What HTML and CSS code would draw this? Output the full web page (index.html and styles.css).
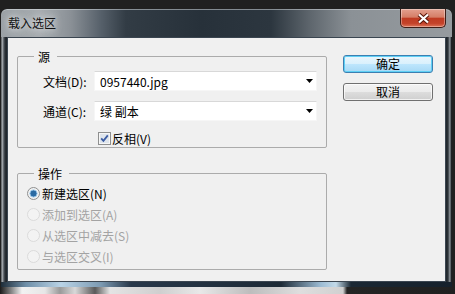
FILE: index.html
```html
<!DOCTYPE html>
<html lang="zh-CN">
<head>
    <meta charset="UTF-8">
    <meta name="viewport" content="width=device-width, initial-scale=1.0">
    <title>载入选区</title>
    <link rel="stylesheet" href="styles.css">
</head>
<body>

    <div class="window">
        <div class="titlebar">
            <span class="title">载入选区</span>
            <button class="close-button" type="button">
                <svg width="13" height="11" viewBox="0 0 13 11">
                    <path d="M2 1.5 L11 9.5 M11 1.5 L2 9.5" stroke="#5a1609" stroke-width="4.2" fill="none"/>
                    <path d="M2 1.5 L11 9.5 M11 1.5 L2 9.5" stroke="#ffffff" stroke-width="2.2" fill="none"/>
                </svg>
            </button>
        </div>

        <div class="client">
            <div class="main">
                <div class="group">
                    <div class="group-title">源</div>
                    <div class="field">
                        <label>文档(D):</label>
                        <div class="select">
                            <span>0957440.jpg</span>
                            <svg width="7" height="4" viewBox="0 0 7 4"><path d="M0 0 H7 L3.5 4 Z" fill="#000"/></svg>
                        </div>
                    </div>
                    <div class="field">
                        <label>通道(C):</label>
                        <div class="select">
                            <span>绿 副本</span>
                            <svg width="7" height="4" viewBox="0 0 7 4"><path d="M0 0 H7 L3.5 4 Z" fill="#000"/></svg>
                        </div>
                    </div>
                    <div class="check">
                        <svg width="13" height="13" viewBox="0 0 13 13">
                            <rect x="0.5" y="0.5" width="12" height="12" fill="#f6f6f6" stroke="#8e8f8f"/>
                            <rect x="2" y="2" width="9" height="9" fill="#dfe5ec"/>
                            <path d="M3.2 6.4 L5.4 8.8 L9.8 3.4" stroke="#3b5ca3" stroke-width="1.8" fill="none"/>
                        </svg>
                        <span>反相(V)</span>
                    </div>
                </div>

                <div class="group group-op">
                    <div class="group-title">操作</div>
                    <div class="radio">
                        <svg width="13" height="13" viewBox="0 0 13 13">
                            <circle cx="6.5" cy="6.5" r="6" fill="#f2f2f2" stroke="#8e8f8f"/>
                            <circle cx="6.5" cy="6.5" r="3.6" fill="#2a6aa3" stroke="#9cc8ea" stroke-width="1"/>
                        </svg>
                        <span>新建选区(N)</span>
                    </div>
                    <div class="radio disabled">
                        <svg width="13" height="13" viewBox="0 0 13 13"><circle cx="6.5" cy="6.5" r="6" fill="#f3f3f3" stroke="#dadada"/></svg>
                        <span>添加到选区(A)</span>
                    </div>
                    <div class="radio disabled">
                        <svg width="13" height="13" viewBox="0 0 13 13"><circle cx="6.5" cy="6.5" r="6" fill="#f3f3f3" stroke="#dadada"/></svg>
                        <span>从选区中减去(S)</span>
                    </div>
                    <div class="radio disabled">
                        <svg width="13" height="13" viewBox="0 0 13 13"><circle cx="6.5" cy="6.5" r="6" fill="#f3f3f3" stroke="#dadada"/></svg>
                        <span>与选区交叉(I)</span>
                    </div>
                </div>
            </div>

            <div class="buttons">
                <button type="button" class="btn btn-default">确定</button>
                <button type="button" class="btn">取消</button>
            </div>
        </div>
    </div>

    <div class="wallpaper"></div>

</body>
</html>
```

FILE: styles.css
```css
body {
    margin: 0;
    padding: 0;
    width: 455px;
    height: 294px;
    overflow: hidden;
    background-color: #202020;
    font-family: "Noto Sans CJK SC", sans-serif;
    font-size: 12px;
    color: #000;
}

.window {
    margin: 9px 0 0 1px;
    width: 451px;
    height: 278px;
    box-sizing: border-box;
    padding: 0 6px 5px;
    border-radius: 6px 6px 0 0;
    display: flex;
    flex-direction: column;
    box-shadow: inset 0 1px 0 rgba(220, 225, 230, 0.5);
    background:
        linear-gradient(to right, #9ba1a6 0px, #a7acb0 40px, #8a9096 70px, #56606a 100px, #323c45 125px, #27313a 200px, #2c363f 270px, #5f676e 310px, #8b9196 350px, #969b9f 451px) top / 100% 28px no-repeat,
        linear-gradient(to right, #1e2c38 0px, #6f8fa8 25px, #b9d3e6 60px, #7c9ab2 100px, #28384a 130px, #1d2a36 280px, #9dbcd4 320px, #c3dae9 335px, #1b2834 350px, #16212c 451px) bottom / 100% 5px no-repeat,
        linear-gradient(to right, #1b1f23 0px, #bfc3c6 1px, #7a8086 2px, #2a3036 4px, #1e2429 6px, #1e2429 445px, #2d343a 447px, #9aa0a5 449px, #2a3036 450px, #111 451px);
}

.titlebar {
    height: 28px;
    display: flex;
    justify-content: space-between;
    align-items: flex-start;
}

.title {
    margin-left: 1px;
    line-height: 28px;
    color: #111;
    text-shadow: 0 0 6px rgba(235, 238, 240, 0.9), 0 0 10px rgba(235, 238, 240, 0.7);
}

.close-button {
    width: 46px;
    height: 19px;
    padding: 0;
    border: 1px solid #3f1d16;
    border-top: none;
    border-radius: 0 0 5px 5px;
    display: flex;
    align-items: center;
    justify-content: center;
    background: linear-gradient(#e3a08f 0%, #d57e67 45%, #bf3b22 52%, #c4432a 80%, #de7458 100%);
    box-shadow: inset 0 0 0 1px rgba(255, 255, 255, 0.35);
}

.client {
    height: 245px;
    box-sizing: border-box;
    border: 1px solid #3a4550;
    background-color: #f0f0f0;
    display: flex;
    gap: 16px;
    padding: 17px 11px 0 9px;
}

.main {
    width: 310px;
    padding-top: 1px;
}

.group {
    border: 1px solid #ababab;
    border-radius: 2px;
    padding-bottom: 2px;
}

.group-op {
    margin-top: 25px;
}

.group-title {
    display: table;
    margin: -8px 0 0 16px;
    padding: 0 7px 0 4px;
    line-height: 15px;
    background-color: #f0f0f0;
}

.field {
    display: flex;
    align-items: center;
    margin: 7px 0 0 25px;
}

.field + .field {
    margin-top: 10px;
}

.field label {
    width: 51px;
}

.select {
    width: 223px;
    height: 20px;
    box-sizing: border-box;
    background-color: #fff;
    border: 1px solid #f6f6f6;
    border-top-color: #d8d8d8;
    display: flex;
    align-items: center;
    justify-content: space-between;
    padding: 0 3px 0 5px;
}

.check {
    display: flex;
    align-items: center;
    gap: 1px;
    margin: 11px 0 0 80px;
    line-height: 13px;
    height: 13px;
}

.radio {
    display: flex;
    align-items: center;
    gap: 2px;
    height: 21px;
    margin-left: 9px;
}

.group-title + .radio {
    margin-top: 2px;
}

.radio.disabled {
    color: #a3a3a3;
}

.buttons {
    display: flex;
    flex-direction: column;
    gap: 10px;
}

.btn {
    width: 90px;
    height: 18px;
    padding: 0;
    font-family: "Noto Sans CJK SC", sans-serif;
    font-size: 12px;
    line-height: 16px;
    color: #000;
    border: 1px solid #707070;
    border-radius: 3px;
    background: linear-gradient(#f3f3f3 0%, #ebebeb 50%, #dddddd 50%, #cfcfcf 100%);
    box-shadow: inset 0 0 0 1px rgba(255, 255, 255, 0.7);
}

.btn-default {
    border-color: #3c7fb1;
    background: linear-gradient(#eaf6fd 0%, #d9f0fc 50%, #bee6fd 50%, #a7d9f5 100%);
    box-shadow: inset 0 0 0 1px #5fd0f5;
}

.wallpaper {
    height: 7px;
    background: linear-gradient(to right, #1a1a1a 0px, #8c8c8c 12px, #f2f2f2 22px, #e6e6e6 45px, #9a9a9a 60px, #d8d8d8 75px, #5a5a5a 95px, #e4e4e4 110px, #cfcfcf 160px, #e8e8e8 200px, #bdbdbd 250px, #dedede 300px, #d0d0d0 343px, #242424 347px, #202020 455px);
}
```
